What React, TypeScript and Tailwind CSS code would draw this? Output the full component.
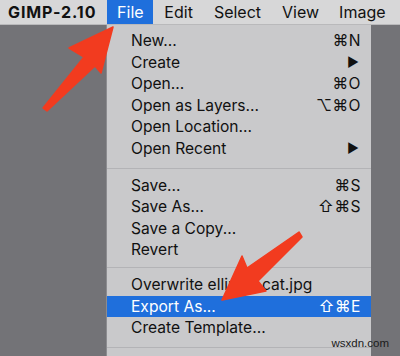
import React from "react";

type Item = { label: string; sc?: string; sub?: boolean; active?: boolean };

const groups: Item[][] = [
  [
    { label: "New...", sc: "⌘N" },
    { label: "Create", sub: true },
    { label: "Open...", sc: "⌘O" },
    { label: "Open as Layers...", sc: "⌥⌘O" },
    { label: "Open Location..." },
    { label: "Open Recent", sub: true },
  ],
  [
    { label: "Save...", sc: "⌘S" },
    { label: "Save As...", sc: "⇧⌘S" },
    { label: "Save a Copy..." },
    { label: "Revert" },
  ],
  [
    { label: "Overwrite ellipse_cat.jpg" },
    { label: "Export As...", sc: "⇧⌘E", active: true },
    { label: "Create Template..." },
  ],
];

function Row({ it }: { it: Item }) {
  return (
    <div
      className={
        "flex h-[21.6px] items-center justify-between pl-[24px] pr-[10px] " +
        (it.active ? "bg-[#1f6fdc] text-white" : "text-[#111]")
      }
    >
      <span>{it.label}</span>
      {it.sc && <span className="tracking-[0.5px]">{it.sc}</span>}
      {it.sub && <span className="pr-[2px] text-[13px]">▶</span>}
    </div>
  );
}

function Sep({ cls }: { cls: string }) {
  return (
    <div className={cls}>
      <div className="h-px bg-[#b3b3b6]" />
    </div>
  );
}

export default function App() {
  return (
    <div
      className="relative h-[356px] w-[400px] overflow-hidden bg-[#737377]"
      style={{ fontFamily: "Inter, 'DejaVu Sans', sans-serif" }}
    >
      <div className="flex h-[25px] items-center border-b border-[#b9b9bb] bg-[#d7d7d8] text-[16px] text-[#111]">
        <div className="pl-[8px] pr-[11px] font-bold tracking-[0.9px]">GIMP-2.10</div>
        <div className="flex h-full w-[46px] items-center justify-center bg-[#1f6fdc] text-white">File</div>
        <div className="ml-[11px]">Edit</div>
        <div className="ml-[21px]">Select</div>
        <div className="ml-[21px]">View</div>
        <div className="ml-[20px]">Image</div>
      </div>
      <div className="flex">
        <div className="w-[107px]" />
        <div className="h-[331px] w-[264px] bg-[#c9c9cb] pt-[5px] text-[15.6px] shadow-[-1px_0_0_#8c8c90]">
          {groups.map((g, gi) => (
            <React.Fragment key={gi}>
              {gi === 1 && <Sep cls="pt-[8px] pb-[6px]" />}
              {gi === 2 && <Sep cls="pt-[6px] pb-[6px]" />}
              {g.map((it) => (
                <Row key={it.label} it={it} />
              ))}
            </React.Fragment>
          ))}
          <Sep cls="pt-[8px]" />
        </div>
      </div>
      <svg
        className="pointer-events-none absolute left-0 top-0"
        width="400"
        height="356"
        viewBox="0 0 400 356"
      >
        <polygon
          points="113,27 69,48 84,57 43,108 47,111 95,66 101,73"
          fill="#f23b1f"
          stroke="#f23b1f"
          strokeWidth="1.5"
          strokeLinejoin="round"
        />
        <polygon
          points="222,300 242,256 247,268 299,232 302,237 258,281 266,291"
          fill="#f23b1f"
          stroke="#f23b1f"
          strokeWidth="1.5"
          strokeLinejoin="round"
        />
      </svg>
      <div
        className="absolute bottom-[4px] right-[11px] text-[11.5px] text-[#1a1a1a]"
        style={{ fontFamily: "'Liberation Sans', sans-serif" }}
      >
        wsxdn.com
      </div>
    </div>
  );
}
